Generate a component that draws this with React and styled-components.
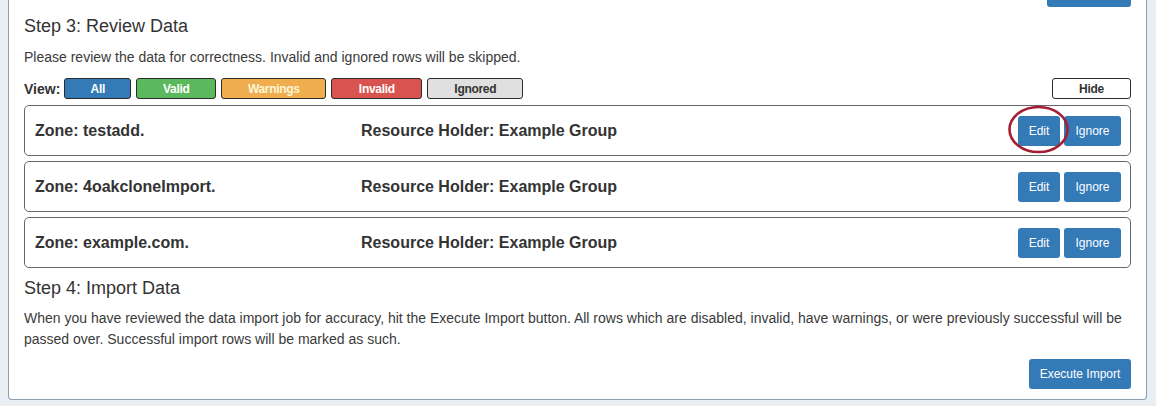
import React from "react";
import styled, { createGlobalStyle } from "styled-components";

const Global = createGlobalStyle`
  html, body { margin: 0; padding: 0; }
  body {
    background: #e9eef2;
    font-family: "Liberation Sans", Arial, sans-serif;
    color: #333;
  }
`;

const Page = styled.div`
  padding: 0 9px 6px 8px;
`;

const Panel = styled.section`
  background: #fff;
  border: 1px solid #8a9fb2;
  border-top: none;
  border-radius: 0 0 4px 4px;
  padding: 0 15px 10px 15px;
  display: flex;
  flex-direction: column;
`;

const TopStrip = styled.div`
  height: 7px;
  overflow: hidden;
  display: flex;
  justify-content: flex-end;
  align-items: flex-end;
`;

const TopButton = styled.div`
  width: 84px;
  height: 30px;
  flex: none;
  background: #337ab7;
  border-radius: 3px;
`;

const Heading = styled.h3`
  margin: ${(p) => p.$mt || 0}px 0 0 0;
  font-size: 18px;
  line-height: 20px;
  font-weight: normal;
  color: #333;
`;

const Paragraph = styled.p`
  margin: ${(p) => p.$mt || 0}px 0 0 0;
  font-size: 14px;
  line-height: 21px;
  color: #3a3a3a;
`;

const ViewBar = styled.div`
  margin-top: 10px;
  display: flex;
  align-items: center;
  height: 21px;
`;

const ViewLabel = styled.span`
  font-size: 14px;
  font-weight: bold;
  margin-right: 4px;
`;

const FilterGroup = styled.div`
  display: flex;
  gap: 5px;
  flex: 1;
`;

const FilterButton = styled.button`
  width: ${(p) => p.$w}px;
  height: 21px;
  box-sizing: border-box;
  background: ${(p) => p.$bg};
  color: ${(p) => p.$fg || "#fff"};
  border: 1px solid #2b2b2b;
  border-radius: 3px;
  font-family: inherit;
  font-size: 12px;
  letter-spacing: -0.3px;
  font-weight: bold;
  padding: 0;
  cursor: pointer;
`;

const Rows = styled.div`
  margin-top: 6px;
  display: flex;
  flex-direction: column;
  gap: 5px;
`;

const Card = styled.div`
  height: 51px;
  box-sizing: border-box;
  border: 1px solid #666;
  border-radius: 5px;
  padding: 0 9px 0 10px;
  display: grid;
  grid-template-columns: 326px 1fr auto;
  align-items: center;
`;

const CardText = styled.span`
  font-size: 16px;
  font-weight: bold;
  color: #333;
`;

const Actions = styled.div`
  position: relative;
  display: flex;
  gap: 4px;
`;

const ActionButton = styled.button`
  height: 30px;
  width: ${(p) => p.$w}px;
  padding: 0;
  background: #337ab7;
  color: #fff;
  border: none;
  border-radius: 3px;
  font-family: inherit;
  font-size: 12px;
  cursor: pointer;
`;

const Highlight = styled.svg`
  position: absolute;
  left: -10px;
  top: -10px;
  width: 62px;
  height: 48px;
  pointer-events: none;
  overflow: visible;
`;

const Footer = styled.div`
  margin-top: 9px;
  display: flex;
  justify-content: flex-end;
`;

const rows = ["testadd.", "4oakcloneImport.", "example.com."];

export default function App() {
  return (
    <>
      <Global />
      <Page>
        <Panel>
          <TopStrip>
            <TopButton />
          </TopStrip>
          <Heading $mt={9}>Step 3: Review Data</Heading>
          <Paragraph $mt={11}>
            Please review the data for correctness. Invalid and ignored rows will be skipped.
          </Paragraph>
          <ViewBar>
            <ViewLabel>View:</ViewLabel>
            <FilterGroup>
              <FilterButton $w={67} $bg="#337ab7">All</FilterButton>
              <FilterButton $w={80} $bg="#5cb85c">Valid</FilterButton>
              <FilterButton $w={105} $bg="#f0ad4e" $fg="#fdf6d8">Warnings</FilterButton>
              <FilterButton $w={91} $bg="#d9534f">Invalid</FilterButton>
              <FilterButton $w={96} $bg="#e0e0e0" $fg="#333">Ignored</FilterButton>
            </FilterGroup>
            <FilterButton $w={79} $bg="#fff" $fg="#333">Hide</FilterButton>
          </ViewBar>
          <Rows>
            {rows.map((z, i) => (
              <Card key={z}>
                <CardText>Zone: {z}</CardText>
                <CardText>Resource Holder: Example Group</CardText>
                <Actions>
                  <ActionButton $w={42}>Edit</ActionButton>
                  <ActionButton $w={57}>Ignore</ActionButton>
                  {i === 0 && (
                    <Highlight viewBox="0 0 62 48">
                      <ellipse cx="30.5" cy="23.5" rx="29" ry="22.5" fill="none" stroke="#a51d33" strokeWidth="2.6" />
                    </Highlight>
                  )}
                </Actions>
              </Card>
            ))}
          </Rows>
          <Heading $mt={10}>Step 4: Import Data</Heading>
          <Paragraph $mt={10}>
            When you have reviewed the data import job for accuracy, hit the Execute Import button. All rows which are disabled, invalid, have warnings, or were previously successful will be passed over. Successful import rows will be marked as such.
          </Paragraph>
          <Footer>
            <ActionButton $w={102}>Execute Import</ActionButton>
          </Footer>
        </Panel>
      </Page>
    </>
  );
}
